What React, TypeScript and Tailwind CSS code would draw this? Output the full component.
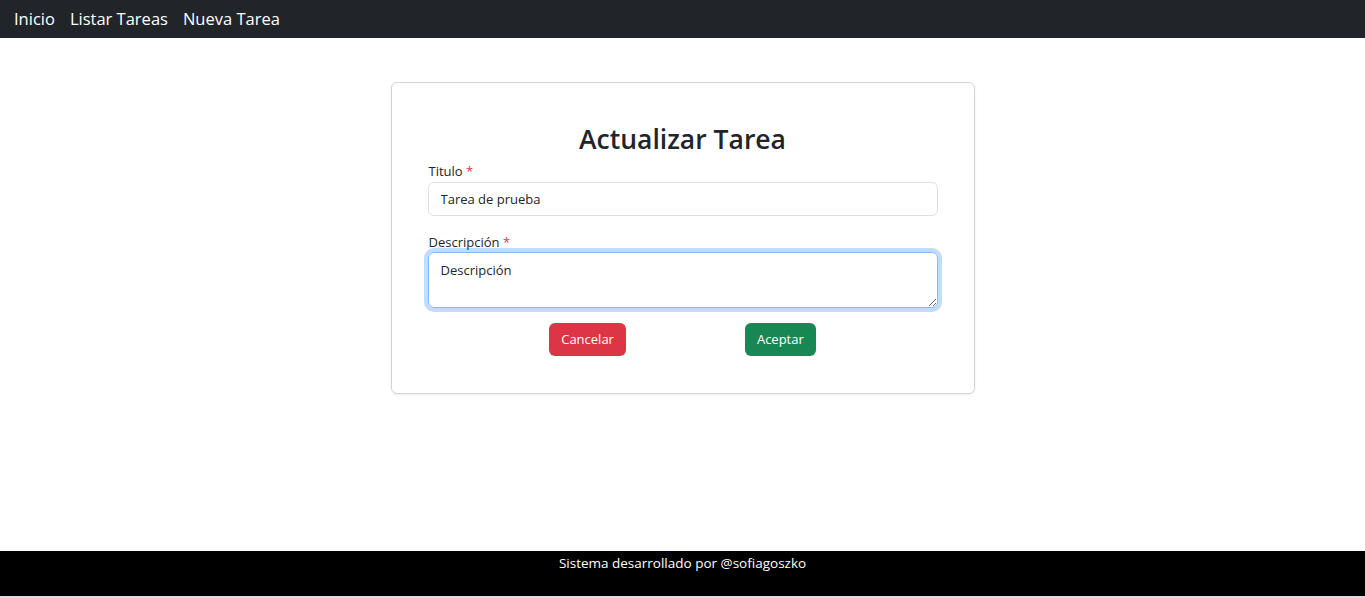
export default function App() {
  return (
    <div className="flex h-[598px] flex-col bg-white font-['Open_Sans',sans-serif] text-[#212529]">
      <nav className="flex h-[38px] items-center gap-[15px] bg-[#212529] pl-[14px] text-[16.5px] text-white">
        <a href="#">Inicio</a>
        <a href="#">Listar Tareas</a>
        <a href="#">Nueva Tarea</a>
      </nav>

      <main className="h-[513px] pt-[44px]">
        <div className="mx-auto w-[584px] rounded-md border border-[#d4d4d4] px-9 pt-9 pb-[37px] shadow-[0_1px_3px_rgba(0,0,0,0.08)]">
          <h1 className="mb-[2px] text-center text-[26.5px] leading-10 font-semibold">Actualizar Tarea</h1>

          <label className="block pl-px text-[13px] leading-5">
            Titulo <span className="text-[#dc3545]">*</span>
          </label>
          <input
            className="mt-px block h-[34px] w-full rounded-md border border-[#dee2e6] px-3 text-[13px] outline-none"
            defaultValue="Tarea de prueba"
          />

          <label className="mt-4 block pl-px text-[13px] leading-5">
            Descripción <span className="text-[#dc3545]">*</span>
          </label>
          <textarea
            className="block h-[56px] w-full rounded-md border border-[#86b7fe] px-3 py-[7px] text-[13px] leading-5 shadow-[0_0_0_4px_rgba(13,110,253,0.25)] outline-none"
            defaultValue="Descripción"
          />

          <div className="mt-[15px] flex justify-center gap-[119px]">
            <button className="h-[33px] rounded-md bg-[#dc3545] px-3 text-[13px] text-white">Cancelar</button>
            <button className="h-[33px] rounded-md bg-[#198754] px-3 text-[13px] text-white">Aceptar</button>
          </div>
        </div>
      </main>

      <footer className="h-[45px] bg-black pt-[2px] text-center text-[13.5px] leading-5 text-white">
        Sistema desarrollado por @sofiagoszko
      </footer>
      <div className="h-[2px] bg-[#dcdce4]" />
    </div>
  );
}
